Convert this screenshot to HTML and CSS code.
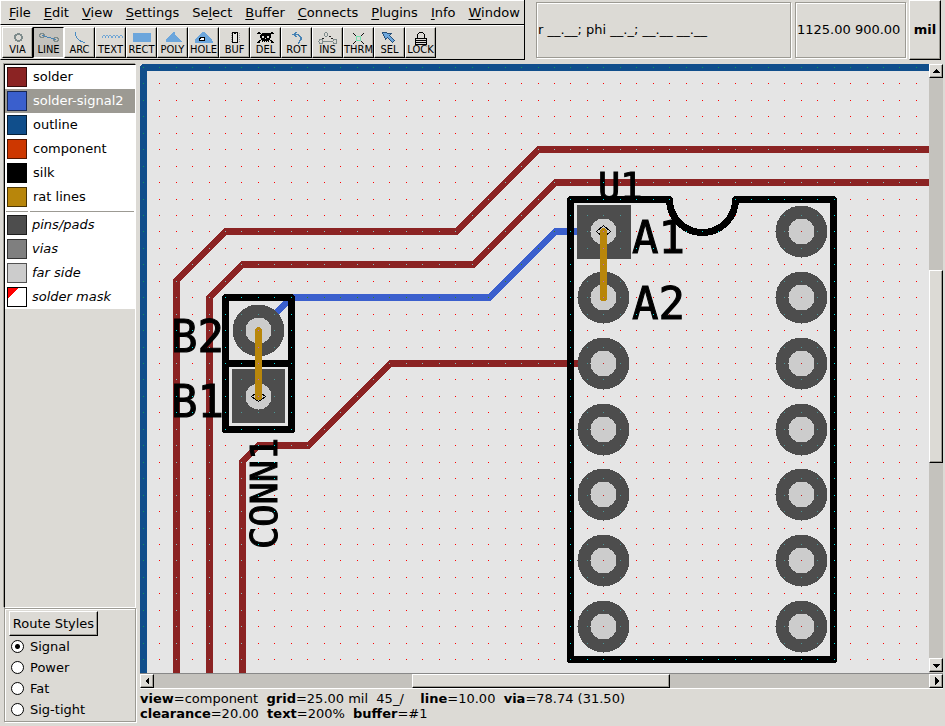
FILE: index.html
```html
<!DOCTYPE html>
<html lang="en">
<head>
<meta charset="utf-8">
<title>PCB</title>
<link rel="stylesheet" href="styles.css">
</head>
<body>
<header class="top">
  <div class="bars">
    <nav class="menu">
      <button><u>F</u>ile</button><button><u>E</u>dit</button><button><u>V</u>iew</button><button><u>S</u>ettings</button><button>Se<u>l</u>ect</button><button><u>B</u>uffer</button><button><u>C</u>onnects</button><button><u>P</u>lugins</button><button><u>I</u>nfo</button><button><u>W</u>indow</button>
    </nav>
    <div class="tools">
      <button class="tool"><svg viewBox="0 0 30 15"><circle cx="15.500" cy="7.500" r="3.500" fill="none" stroke="#7f8c8c" stroke-width="2"/></svg><span>VIA</span></button>
      <button class="tool on"><svg viewBox="0 0 30 15"><g fill="none" stroke="#7f8c8c"><circle cx="8" cy="5.500" r="2.200"/><circle cx="22" cy="9.500" r="2.200"/></g><path d="M8 5.500L22 9.500" stroke="#4682b4"/></svg><span>LINE</span></button>
      <button class="tool"><svg viewBox="0 0 30 15"><path d="M10.500 2V5Q12 11 20 12.500" fill="none" stroke="#4a8cc4"/></svg><span>ARC</span></button>
      <button class="tool"><svg viewBox="0 0 30 15"><path d="M6 6.500l1.500-1.500 1.500 1.500-1.500 1.500zM9.400 6.500l1.500-1.500 1.500 1.500-1.500 1.500zM12.800 6.500l1.500-1.500 1.500 1.500-1.500 1.500zM16.200 6.500l1.500-1.500 1.500 1.500-1.500 1.500zM19.600 6.500l1.500-1.500 1.500 1.500-1.500 1.500zM23 6.500l1.500-1.500 1.500 1.500-1.500 1.500z" fill="none" stroke="#5b9bd5" stroke-width=".8"/></svg><span>TEXT</span></button>
      <button class="tool"><svg viewBox="0 0 30 15"><path d="M6 3h18v9H6z" fill="#6ca6dc"/></svg><span>RECT</span></button>
      <button class="tool"><svg viewBox="0 0 30 15"><path d="M8 12V9l7-7h2v3l7 7z" fill="#6ca6dc"/></svg><span>POLY</span></button>
      <button class="tool"><svg viewBox="0 0 30 15"><path d="M6 12V9l7-7h2l7 6 2 4v1H6z" fill="#6ca6dc"/><path d="M10.500 10.500v-2l2-1h3v3z" fill="#fff" stroke="#000"/></svg><span>HOLE</span></button>
      <button class="tool"><svg viewBox="0 0 30 15"><path d="M11 3v10M19 3v10" stroke="#999" stroke-dasharray="1 1"/><path d="M12.500 2.500h2v1h1v-1h2v10h-5z" fill="#e8e8e4" stroke="#000"/></svg><span>BUF</span></button>
      <button class="tool"><svg viewBox="0 0 30 15"><path d="M7 2l15 10M22 2L7 12M6 3h3M20 3h3M6 12h3M20 12h3" stroke="#000"/><path d="M11 3h7l2 2v3l-2 1v3h-7V9L9 8V5z"/><path d="M11 6h2v2h-2zM16 6h2v2h-2zM14 8h1v1h-1zM12 11h1v1h-1zM14 11h1v1h-1zM16 11h1v1h-1z" fill="#dcdad5"/></svg><span>DEL</span></button>
      <button class="tool"><svg viewBox="0 0 30 15"><path d="M11 4.500h5l3 3v2l-3 4M14.500 2l-3 2.500 3 2.500" fill="none" stroke="#4682b4" stroke-width="1.500"/></svg><span>ROT</span></button>
      <button class="tool"><svg viewBox="0 0 30 15"><g fill="none" stroke="#7f8c8c"><circle cx="8" cy="11.500" r="2"/><circle cx="22" cy="11.500" r="2"/><circle cx="13" cy="4.500" r="1.800"/><path d="M10 11.500h10"/></g><path d="M9 8.500h2M16 6.500h2M18 8.500h2" stroke="#222"/></svg><span>INS</span></button>
      <button class="tool"><svg viewBox="0 0 30 15"><path d="M9 3l3 3M20 3l-3 3M9 14l3-3M20 14l-3-3" stroke="#111"/><path d="M12.500 6.500h4v4h-4z" fill="none" stroke="#76e0b0" stroke-width="1.500"/></svg><span>THRM</span></button>
      <button class="tool"><svg viewBox="0 0 30 15"><path d="M7.500 2.500l9 1-2 2 5 5-2 2-5-5-2 2z" fill="#6ca6dc" stroke="#285078"/></svg><span>SEL</span></button>
      <button class="tool"><svg viewBox="0 0 30 15"><path d="M11.500 9V4.500l2-2h3l2 2V9" fill="none" stroke="#000"/><path d="M9 8h12v7H9z"/><path d="M10 9.500h10M10 11.500h10M10 13.500h10" stroke="#dcdad5"/></svg><span>LOCK</span></button>
    </div>
  </div>
  <output class="readout grow">r __.__; phi __._; __.__ __.__</output>
  <output class="readout coords">1125.00 900.00</output>
  <button class="units">mil</button>
</header>
<main class="work">
  <aside class="side">
    <div class="layers">
      <button class="layer"><i class="sw solder"></i>solder</button>
      <button class="layer sel"><i class="sw signal"></i>solder-signal2</button>
      <button class="layer"><i class="sw outline"></i>outline</button>
      <button class="layer"><i class="sw component"></i>component</button>
      <button class="layer"><i class="sw silk"></i>silk</button>
      <button class="layer"><i class="sw rat"></i>rat lines</button>
      <hr>
      <button class="layer it"><i class="sw pins"></i>pins/pads</button>
      <button class="layer it"><i class="sw vias"></i>vias</button>
      <button class="layer it"><i class="sw far"></i>far side</button>
      <button class="layer it"><i class="sw mask"></i>solder mask</button>
    </div>
    <div class="routes">
      <button class="styles">Route Styles</button>
      <label><input type="radio" name="route" checked>Signal</label>
      <label><input type="radio" name="route">Power</label>
      <label><input type="radio" name="route">Fat</label>
      <label><input type="radio" name="route">Sig-tight</label>
    </div>
  </aside>
  <section class="view">
    <svg class="board">
      <g transform="translate(-140 -64)">
        <path id="under" class="d-under"/>
        <path class="line c-outline" d="M3000 67.500H143.500V3000"/>
        <g class="line c-solder">
          <path d="M3000 149.500H538.500L456.500 231.500H225.500L176.500 280.500V3000"/>
          <path d="M3000 182.500H555.500L473.500 264.500H242.500L209.500 297.500V3000"/>
          <path d="M603.500 363.500H390.500L308.500 445.500H258.500L242.500 461.500V3000"/>
        </g>
        <path class="line c-signal" d="M603.500 231.500H555.500L489.500 297.500H291.500L258.500 330.500"/>
        <g id="pads" class="pad">
          <path d="M577 205h54v54h-54zM232 369h53v54h-53z"/>
        </g>
        <g class="line c-silk">
          <path d="M669.500 199.500H570.500V659.500H833.500V199.500H735.500A33 33 0 0 1 669.500 199.500"/>
          <path d="M225.500 297.500H291.500V429.500H225.500zM225.500 363.500H291.500"/>
        </g>
        <g class="ref">
          <text x="632" y="253">A1</text>
          <text x="632" y="319">A2</text>
          <text x="171" y="352">B2</text>
          <text x="171" y="417">B1</text>
          <text class="name" x="598" y="199">U1</text>
          <text class="name" transform="translate(277 549) rotate(-90)">CONN1</text>
        </g>
        <path class="mark" d="M596.500 231.500l7-6 7 6-7 6zM251.500 396.500l7-5 7 5-7 5z"/>
        <path class="line c-rat" d="M603.500 231.500V297.500M258.500 330.500V396.500"/>
        <path id="over" class="d-over"/>
      </g>
    </svg>
    <div class="bar v"><button class="arrow" aria-label="Up"><svg viewBox="0 0 10 10"><path d="M5 3l4 4H1z"/></svg></button><div class="track"><div class="thumb"></div></div><button class="arrow" aria-label="Down"><svg viewBox="0 0 10 10"><path d="M1 4h8L5 8z"/></svg></button></div>
    <div class="bar h"><button class="arrow" aria-label="Left"><svg viewBox="0 0 10 10"><path d="M7 1v8L3 5z"/></svg></button><div class="track"><div class="thumb"></div></div><button class="arrow" aria-label="Right"><svg viewBox="0 0 10 10"><path d="M4 1l4 4-4 4z"/></svg></button></div>
    <footer class="status"><b>view</b>=component&nbsp; <b>grid</b>=25.00 mil&nbsp; 45_/&nbsp;&nbsp;&nbsp; <b>line</b>=10.00&nbsp; <b>via</b>=78.74 (31.50)<br><b>clearance</b>=20.00&nbsp; <b>text</b>=200%&nbsp; <b>buffer</b>=#1</footer>
  </section>
</main>
<script src="board.js"></script>
</body>
</html>
```
FILE: styles.css
```css
* { box-sizing: border-box; }
body {
  margin: 0;
  height: 100vh;
  display: flex;
  flex-direction: column;
  background: #dcdad5;
  color: #000;
  font: 13px/16px "DejaVu Sans", sans-serif;
  overflow: hidden;
}
button { font: inherit; color: inherit; background: none; border: 0; padding: 0; margin: 0; }

.top { display: flex; height: 60px; flex: none; }
.bars { width: 525px; flex: none; display: flex; flex-direction: column; border-right: 1px solid #000; margin-right: 11px; }
.menu {
  display: flex;
  gap: 13px;
  height: 25px;
  padding: 0 0 0 8px;
  border: solid;
  border-width: 1px 0 1px 1px;
  border-color: #fff #000 #000 #fff;
  align-items: center;
}
.menu u { text-underline-offset: 2px; }
.tools { display: flex; height: 35px; padding: 1px 0 0 1px; border: solid; border-width: 1px 0 1px 1px; border-color: #fff #000 #000 #fff; }
.tool {
  width: 31px;
  height: 31px;
  display: flex;
  flex-direction: column;
  align-items: center;
  border: solid;
  border-width: 1px;
  border-color: #fff #000 #000 #fff;
  box-shadow: inset -1px -1px #aaa89f;
}
.tool svg { width: 30px; height: 15px; margin-top: 2px; flex: none; shape-rendering: crispEdges; }
.tool span { font: 11px/10px "DejaVu Sans Condensed", "DejaVu Sans", sans-serif; font-stretch: condensed; }
.tool.on { background: #c4c2bd; border-color: #000 #fff #fff #000; box-shadow: none; }

.readout {
  display: flex;
  align-items: center;
  height: 56px;
  margin: 2px 4px 0 0;
  border: 1px solid #9c9a93;
  outline: 0;
  box-shadow: inset 1px 1px #fff, 1px 1px #fff;
  white-space: nowrap;
}
.grow { flex: 1; padding-left: 1px; }
.coords { width: 111px; margin-right: 3px; padding-left: 1px; }
.units { width: 32px; height: 60px; margin-right: 4px; font-weight: bold; border: solid; border-width: 1px; border-color: #fff #000 #000 #fff; box-shadow: inset -1px -1px #9c9a93; }

.work { flex: 1; min-height: 0; display: flex; padding: 4px 2px 0 4px; gap: 4px; }
.side { width: 132px; flex: none; display: flex; flex-direction: column; padding-bottom: 4px; }
.layers { flex: 1; border: solid; border-width: 1px; border-color: #000 #fff #fff #000; box-shadow: -1px -1px #9c9a93; }
.layer { display: flex; align-items: center; width: 100%; height: 24px; padding-left: 2px; gap: 6px; background: #fff; text-align: left; }
.layer.it { font-style: italic; gap: 5px; }
.layer.sel { background: #9c9a93; color: #fff; }
.layers hr { margin: 0; border: solid #fff; border-width: 2px 1px 1px; height: 4px; background: linear-gradient(90deg, #9c9a93 22px, #fff 22px, #fff 24px, #9c9a93 24px); }
.sw { width: 20px; height: 20px; flex: none; border: 1px solid rgba(0, 0, 0, .6); background-clip: border-box; }
.solder { background-color: #8b2323; }
.signal { background-color: #3a5fcd; }
.outline { background-color: #104e8b; }
.component { background-color: #cd3700; }
.silk { background-color: #000; }
.rat { background-color: #b8860b; }
.pins { background-color: #4d4d4d; }
.vias { background-color: #7f7f7f; }
.far { background-color: #ccc; }
.mask { background: linear-gradient(135deg, #f00 28%, #fff 28%); border-color: #000; }

.routes { height: 114px; border: 1px solid #9c9a93; box-shadow: inset 1px 1px #fff, 1px 1px #fff; padding: 2px 0 0 4px; display: flex; flex-direction: column; align-items: flex-start; }
.styles { width: 89px; height: 25px; border: solid; border-width: 1px; border-color: #fff #000 #000 #fff; box-shadow: inset -1px -1px #9c9a93; }
.routes label { display: flex; align-items: center; gap: 6px; height: 21px; padding-left: 2px; }
.routes input { appearance: none; width: 13px; height: 13px; margin: 0; border: 1px solid #000; border-radius: 50%; background: #fff; }
.routes input:checked { background: radial-gradient(circle, #000 2px, #fff 3px); }

.view { flex: 1; min-width: 0; display: grid; grid-template-columns: 1fr 14px; grid-template-rows: 1fr 16px 37px; }
.board { width: 100%; height: 100%; min-height: 0; background: #e5e5e5; shape-rendering: crispEdges; overflow: hidden; isolation: isolate; }
.line { fill: none; stroke-width: 7px; stroke-linecap: round; stroke-linejoin: round; }
.c-outline { stroke: #104e8b; }
.c-solder { stroke: #8b2323; }
.c-signal { stroke: #3a5fcd; }
.c-silk { stroke: #000; }
.c-rat { stroke: #b8860b; }
.pad { fill: #4d4d4d; }
.hole { fill: #ccc; }
.mark { fill: none; stroke: #000; }
.ref { font: 44px "DejaVu Sans Mono", monospace; stroke: #000; stroke-width: 1px; }
.ref .name { font-size: 37px; }
.d-under { fill: #ffe5e5; }
.d-over { fill: #00e5e5; mix-blend-mode: difference; }

.bar { display: flex; background: #c4c2bd; }
.v { flex-direction: column; padding-bottom: 1px; box-shadow: -1px 0 #888; }
.h { grid-column: 1 / 3; border-top: 1px solid #888; border-bottom: 1px solid #fff; }
.arrow { width: 14px; height: 14px; flex: none; display: flex; background: #dcdad5; border: solid; border-width: 1px; border-color: #fff #000 #000 #fff; box-shadow: inset -1px -1px #9c9a93; }
.arrow svg { width: 10px; height: 10px; margin: 1px; shape-rendering: crispEdges; }
.track { flex: 1; display: flex; }
.v .track { flex-direction: column; padding-top: 192px; }
.h .track { padding-left: 258px; }
.thumb { background: #dcdad5; border: solid; border-width: 1px; border-color: #fff #000 #000 #fff; box-shadow: inset -1px -1px #9c9a93; }
.v .thumb { flex: 0 0 193px; }
.h .thumb { flex: 0 0 258px; }
.status { grid-column: 1 / 3; padding-top: 2px; line-height: 15px; white-space: nowrap; }
```
FILE: board.js
```js
// Pads and drill holes
const pads = document.getElementById("pads");
const rows = [231.5, 297.5, 363.5, 429.5, 494.5, 560.5, 626.5];
const circle = (x, y, r, cls) => `<circle cx="${x}" cy="${y}" r="${r}" class="${cls}"/>`;
let out = "";
for (const y of rows) {
  for (const x of [603.5, 801.5]) {
    if (!(x === 603.5 && y === 231.5)) out += circle(x, y, 26, "pad");
    out += circle(x, y, 13, "hole");
  }
}
out += circle(258.5, 330.5, 26, "pad") + circle(258.5, 330.5, 13, "hole") + circle(258.5, 396.5, 13, "hole");
pads.innerHTML += out;

// Grid points, inverted against whatever lies beneath them
let d = "";
for (let i = 0; i < 120; i++) {
  for (let j = 0; j < 80; j++) {
    d += `M${Math.round(142.7 + 16.45 * i)} ${Math.round(66.9 + 16.45 * j)}h1v1h-1z`;
  }
}
document.getElementById("under").setAttribute("d", d);
document.getElementById("over").setAttribute("d", d);
```
